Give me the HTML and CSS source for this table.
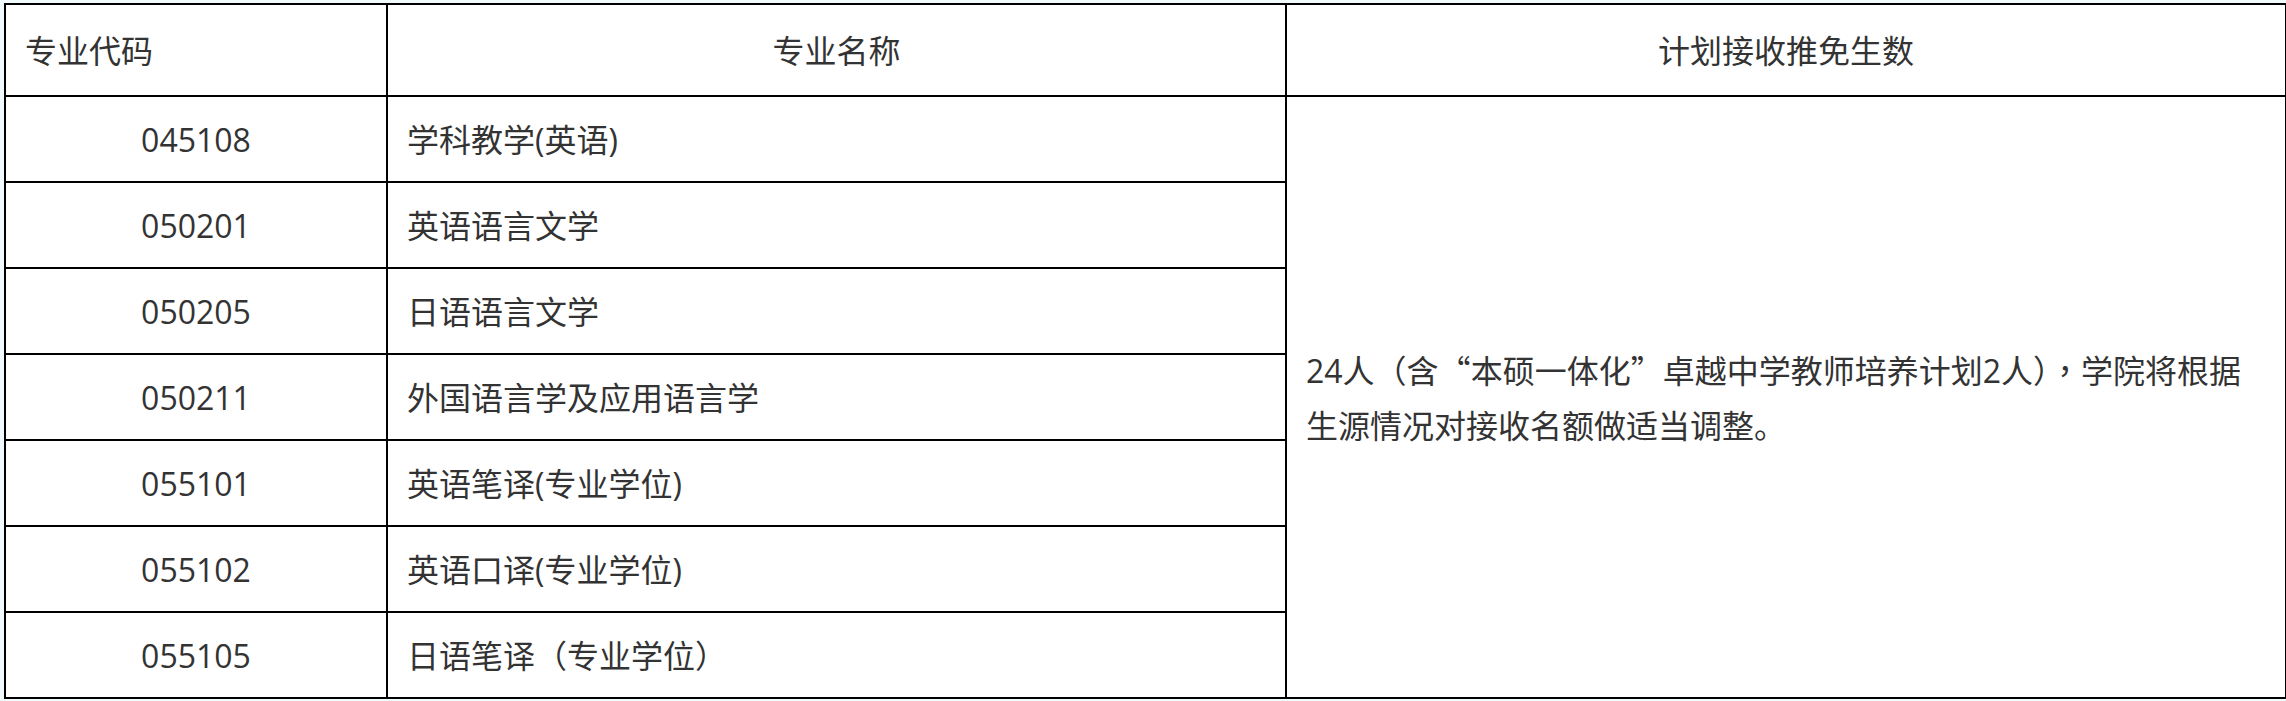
FILE: index.html
```html
<!DOCTYPE html>
<html lang="zh-CN">
<head>
<meta charset="utf-8">
<title>推免生计划</title>
<link rel="stylesheet" href="styles.css">
</head>
<body>
<table class="plan">
  <colgroup>
    <col class="c-code">
    <col class="c-name">
    <col class="c-plan">
  </colgroup>
  <thead>
    <tr class="head-row">
      <th class="left">专业代码</th>
      <th>专业名称</th>
      <th>计划接收推免生数</th>
    </tr>
  </thead>
  <tbody>
    <tr>
      <td class="code">045108</td>
      <td class="name">学科教学(英语)</td>
      <td class="plan-cell" rowspan="7">24人（含<span class="q">“</span>本硕一体化<span class="q">”</span>卓越中学教师培养计划2人）<span class="comma" lang="zh-TW">，</span>学院将根据<br>生源情况对接收名额做适当调整。</td>
    </tr>
    <tr>
      <td class="code">050201</td>
      <td class="name">英语语言文学</td>
    </tr>
    <tr>
      <td class="code">050205</td>
      <td class="name">日语语言文学</td>
    </tr>
    <tr>
      <td class="code">050211</td>
      <td class="name">外国语言学及应用语言学</td>
    </tr>
    <tr>
      <td class="code">055101</td>
      <td class="name">英语笔译(专业学位)</td>
    </tr>
    <tr>
      <td class="code">055102</td>
      <td class="name">英语口译(专业学位)</td>
    </tr>
    <tr>
      <td class="code">055105</td>
      <td class="name">日语笔译（专业学位）</td>
    </tr>
  </tbody>
</table>
</body>
</html>
```

FILE: styles.css
```css
html, body {
  margin: 0;
  padding: 0;
  background: #f1fbfd;
}

body {
  padding: 3px 0 0 4px;
  font-family: "Open Sans", "Noto Sans CJK SC", sans-serif;
  font-size: 32px;
  color: #333333;
}

.plan {
  border-collapse: collapse;
  table-layout: fixed;
  width: 2281px;
  background: #ffffff;
  border: 2px solid #000000;
}

.c-code { width: 382px; }
.c-name { width: 899px; }
.c-plan { width: 1000px; }

.plan th,
.plan td {
  border: 2px solid #000000;
  padding: 0 19px;
  line-height: 55px;
  vertical-align: middle;
  font-weight: normal;
  white-space: nowrap;
}

.plan th {
  text-align: center;
}

.plan th.left {
  text-align: left;
}

.head-row {
  height: 92px;
}

.plan tbody tr {
  height: 86px;
}

.code {
  text-align: center;
}

.name {
  text-align: left;
  padding-left: 21px;
}

.plan-cell {
  text-align: left;
}

.q {
  font-family: "Noto Sans CJK SC", sans-serif;
}

.comma {
  font-family: "Noto Sans CJK TC", sans-serif;
}
```
